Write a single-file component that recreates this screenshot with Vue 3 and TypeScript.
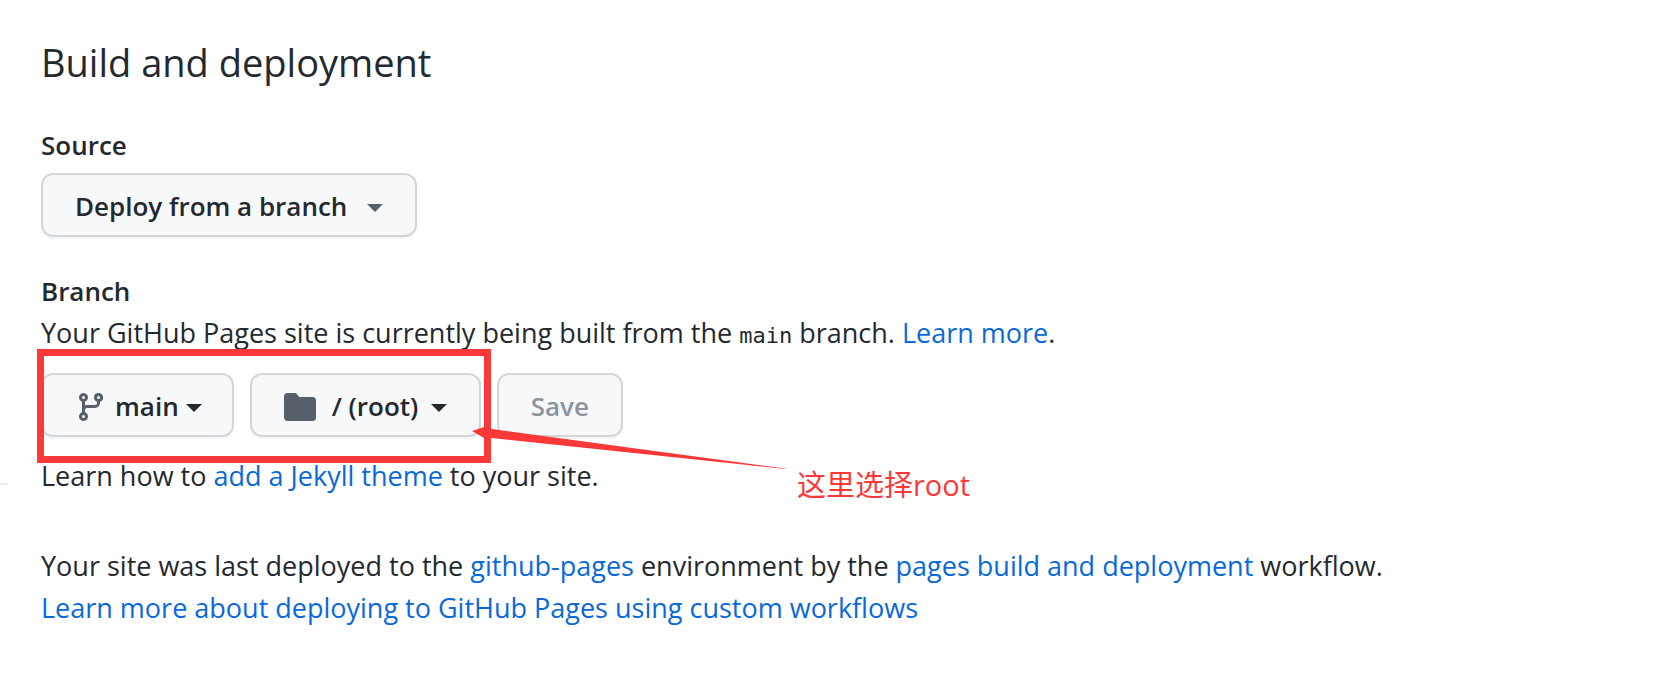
<script setup lang="ts">
const branch = 'main'
const folder = '/ (root)'
</script>

<template>
  <div class="page">
    <div class="rail"><hr /></div>
    <main>
      <h2>Build and deployment</h2>

      <section class="source">
        <h3 id="source-title">Source</h3>
        <button type="button" class="btn" aria-describedby="source-title">
          Deploy from a branch<span class="caret muted"></span>
        </button>
      </section>

      <section>
        <h3>Branch</h3>
        <p>
          Your GitHub Pages site is currently being built from the <code>{{ branch }}</code> branch.
          <a href="#">Learn more</a>.
        </p>
        <div class="controls">
          <button type="button" class="btn branch">
            <svg viewBox="0 0 16 16" aria-hidden="true">
              <path fill-rule="evenodd" d="M11.75 2.5a.75.75 0 1 0 0 1.5.75.75 0 0 0 0-1.5zm-2.25.75a2.25 2.25 0 1 1 3 2.122V6A2.5 2.5 0 0 1 10 8.5H6a1 1 0 0 0-1 1v1.128a2.251 2.251 0 1 1-1.5 0V5.372a2.25 2.25 0 1 1 1.5 0v1.836A2.492 2.492 0 0 1 6 7h4a1 1 0 0 0 1-1v-.628A2.25 2.25 0 0 1 9.5 3.25zM4.25 12a.75.75 0 1 0 0 1.5.75.75 0 0 0 0-1.5zM3.5 3.25a.75.75 0 1 1 1.5 0 .75.75 0 0 1-1.5 0z" />
            </svg>
            {{ branch }}<span class="caret"></span>
          </button>
          <button type="button" class="btn folder">
            <svg viewBox="0 0 16 16" aria-hidden="true">
              <path d="M1.75 1A1.75 1.75 0 0 0 0 2.75v10.5C0 14.216.784 15 1.75 15h12.5A1.75 1.75 0 0 0 16 13.25v-8.5A1.75 1.75 0 0 0 14.25 3h-6.5a.25.25 0 0 1-.2-.1l-.9-1.2c-.33-.44-.85-.7-1.4-.7h-3.5z" />
            </svg>
            {{ folder }}<span class="caret"></span>
          </button>
          <button type="button" class="btn" disabled>Save</button>
          <div class="frame"></div>
          <svg class="arrow" viewBox="0 0 314 44" aria-hidden="true">
            <path d="M0 5 12 1 20 3 313 42.5V43L20 12 12 12Z" />
          </svg>
          <span class="note">这里选择root</span>
        </div>
        <p>Learn how to <a href="#">add a Jekyll theme</a> to your site.</p>
      </section>

      <section class="status">
        <p>
          Your site was last deployed to the <a href="#">github-pages</a> environment by the
          <a href="#">pages build and deployment</a> workflow.
        </p>
        <p><a href="#">Learn more about deploying to GitHub Pages using custom workflows</a></p>
      </section>
    </main>
  </div>
</template>

<style>
body {
  margin: 0;
  background: #fff;
}
</style>

<style scoped>
.page {
  display: flex;
  gap: 33px;
  color: #24292f;
  font: 27px/42px "Open Sans", "Noto Sans", "Noto Sans CJK SC", sans-serif;
}
.rail {
  flex: none;
  width: 8px;
  padding-top: 483px;
}
hr {
  margin: 0;
  border: 0;
  height: 2px;
  background: #e9ecef;
}
main {
  flex: 1;
  min-width: 0;
  padding: 32px 32px 44px 0;
}
h2,
h3,
p {
  margin: 0;
}
h2 {
  margin-bottom: 32px;
  font-size: 38px;
  font-weight: 400;
  line-height: 60px;
}
h3 {
  font-size: 26px;
  font-weight: 600;
}
a {
  color: #0969da;
  text-decoration: none;
}
code {
  font: 22px "DejaVu Sans Mono", monospace;
}
.source {
  margin-bottom: 33px;
}
.source .btn {
  min-width: 376px;
  margin-top: 7px;
}
.status {
  margin-top: 48px;
}
.btn {
  box-sizing: border-box;
  display: flex;
  align-items: center;
  height: 64px;
  padding: 2px 32px 0;
  border: 2px solid #d3d7da;
  border-radius: 12px;
  background: #f6f8fa;
  box-shadow: 0 2px 0 #f5f6f7;
  color: #24292f;
  font: inherit;
  font-size: 26px;
  font-weight: 600;
  white-space: nowrap;
}
.btn:disabled {
  color: #8c959f;
}
.btn svg {
  width: 32px;
  height: 32px;
  margin-top: 2px;
  fill: #57606a;
}
.branch {
  padding-right: 30px;
}
.branch svg {
  margin-right: 8px;
}
.folder {
  min-width: 231px;
}
.folder svg {
  margin-right: 16px;
}
.caret {
  margin: 4px 0 0 auto;
  border: 8px solid transparent;
  border-top-color: #24292f;
  border-bottom-width: 0;
}
.branch .caret {
  margin-left: 7px;
}
.caret.muted {
  border-top-color: #57606a;
}
.controls {
  position: relative;
  display: flex;
  gap: 16px;
  width: fit-content;
  margin: 19px 0 18px;
}
.frame {
  position: absolute;
  top: -24px;
  left: -4px;
  box-sizing: border-box;
  width: 454px;
  height: 114px;
  border: 7px solid #fc3838;
}
.arrow {
  position: absolute;
  top: 53px;
  left: 431px;
  width: 314px;
  height: 44px;
  fill: #fc3838;
}
.note {
  position: absolute;
  top: 91px;
  left: 756px;
  color: #fc3838;
  font-size: 29px;
  white-space: nowrap;
}
</style>
